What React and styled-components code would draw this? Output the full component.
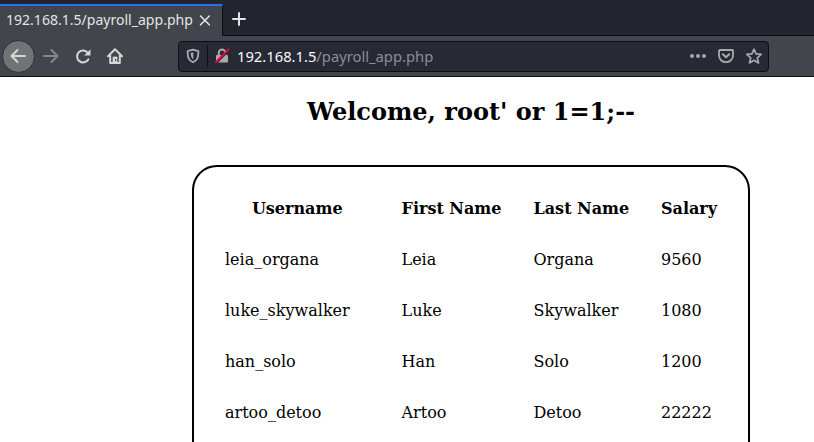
import React from "react";
import styled, { createGlobalStyle } from "styled-components";

const Global = createGlobalStyle`
  * { box-sizing: border-box; }
  html, body { margin: 0; background: #fff; overflow: hidden; }
`;

const Window = styled.div`
  width: 814px;
  height: 442px;
  overflow: hidden;
  background: #fff;
`;

const Chrome = styled.header`
  font-family: "Noto Sans", sans-serif;
  color: #e4e4e5;
`;

const TabStrip = styled.div`
  display: flex;
  height: 36px;
  padding-top: 4px;
  background: #23252e;
`;

const Tab = styled.div`
  display: flex;
  align-items: center;
  width: 223px;
  height: 32px;
  padding: 0 0 2px 6px;
  border-top: 2px solid #2374f0;
  border-right: 1px solid #0e0f14;
  background: #42454c;
  font-size: 14.05px;
  line-height: 20px;
  white-space: nowrap;
`;

const TabTitle = styled.span`
  width: 192px;
`;

const NewTab = styled.div`
  flex: 1;
  padding: 7px 0 0 8px;
  border-bottom: 1px solid #0e0f14;
`;

const Toolbar = styled.div`
  display: flex;
  align-items: center;
  height: 41px;
  padding-left: 2px;
  border-bottom: 1px solid #0c0c0d;
  background: #42454c;
`;

const NavButton = styled.div`
  display: grid;
  place-items: center;
  width: 32px;
  height: 32px;
  color: ${(p) => (p.$dim ? "#85878b" : "#d6d6d5")};
`;

const BackButton = styled(NavButton)`
  width: 33px;
  height: 33px;
  padding-right: 1px;
  border: 1px solid #2d2f35;
  border-radius: 50%;
  background: #717377;
`;

const AddressBar = styled.div`
  display: flex;
  align-items: center;
  width: 591px;
  height: 31px;
  margin-left: 47px;
  padding: 0 6px;
  border: 1px solid #0e0f14;
  border-radius: 4px;
  background: #272935;
  color: #a9a9ac;
`;

const Divider = styled.div`
  width: 1px;
  height: 22px;
  margin: 0 6px;
  background: #0e0f14;
`;

const Url = styled.div`
  flex: 1;
  margin-left: 7px;
  font-size: 14.75px;
  line-height: 20px;
  color: #8d8e93;
`;

const Host = styled.span`
  color: #fbfbfe;
`;

const Actions = styled.div`
  display: flex;
  gap: 12px;
`;

const Glyph = styled.svg`
  display: block;
  flex: none;
  width: ${(p) => p.$size || 16}px;
  height: ${(p) => p.$size || 16}px;
  fill: none;
  stroke: currentColor;
  stroke-width: ${(p) => p.$weight || 2};
  stroke-linecap: round;
  stroke-linejoin: round;
`;

const Page = styled.main`
  padding-left: 128px;
  font-family: "DejaVu Serif", serif;
  color: #000;
`;

const Heading = styled.h2`
  width: 686px;
  margin: 0;
  padding-top: 21px;
  font-size: 24px;
  line-height: 28px;
  text-align: center;
`;

const Card = styled.section`
  width: 558px;
  height: 400px;
  margin: 39px 0 0 64px;
  padding: 16px 31px;
  border: 2px solid #000;
  border-radius: 25px;
`;

const Row = styled.div`
  display: grid;
  grid-template-columns: 144.5px 100px 95.5px 56px;
  column-gap: 32px;
  height: 51px;
  align-items: center;
  font-size: 16px;
  font-weight: ${(p) => (p.$head ? 700 : 400)};
  line-height: 19px;
  white-space: nowrap;
`;

const Cell = styled.div`
  text-align: ${(p) => (p.$center ? "center" : "left")};
`;

const people = [
  ["leia_organa", "Leia", "Organa", "9560"],
  ["luke_skywalker", "Luke", "Skywalker", "1080"],
  ["han_solo", "Han", "Solo", "1200"],
  ["artoo_detoo", "Artoo", "Detoo", "22222"],
];

const Arrow = ({ flip }) => (
  <Glyph viewBox="0 0 16 16">
    <path d={flip ? "M1 8h13M8.5 2l6 6-6 6" : "M15 8H2M7.5 2l-6 6 6 6"} />
  </Glyph>
);

export default function App() {
  return (
    <Window>
      <Global />
      <Chrome>
        <TabStrip>
          <Tab>
            <TabTitle>192.168.1.5/payroll_app.php</TabTitle>
            <Glyph $size={14} $weight={1.6} viewBox="0 0 14 14">
              <path d="M2.5 3l8.8 8.8M11.3 3l-8.8 8.8" />
            </Glyph>
          </Tab>
          <NewTab>
            <Glyph viewBox="0 0 16 16">
              <path d="M8 2v12M2 8h12" />
            </Glyph>
          </NewTab>
        </TabStrip>
        <Toolbar>
          <BackButton><Arrow /></BackButton>
          <NavButton $dim><Arrow flip /></NavButton>
          <NavButton>
            <Glyph viewBox="0 0 16 16">
              <path d="M13.3 11.4A6 6 0 1 1 13 5" />
              <path d="M15.5 1.2v6.3H9.2z" fill="currentColor" stroke="none" />
            </Glyph>
          </NavButton>
          <NavButton>
            <Glyph viewBox="0 0 16 16">
              <path d="M1 8.2L8 1.2l7 7M3.2 7.5V15h9.6V7.5" />
              <path d="M6 15V9h4v6z" fill="currentColor" strokeWidth="0.8" />
              <rect x="8" y="11" width="1.2" height="2" fill="#42454c" stroke="none" />
            </Glyph>
          </NavButton>
          <AddressBar>
            <Glyph viewBox="0 0 16 16">
              <path d="M8 1.7l5.4 1.5c0 6.2-.9 9-5.4 11.1C3.5 12.200 2.6 9.4 2.6 3.200z" strokeWidth="1.8" />
              <path d="M8.300 4.300v7.200c-1.900-1.400-2.600-3.300-2.700-6.400z" fill="currentColor" stroke="none" />
            </Glyph>
            <Divider />
            <Glyph viewBox="0 0 16 16">
              <path d="M4.8 7V4.8a3.2 3.2 0 0 1 6.4 0V7" />
              <rect x="2" y="7" width="12" height="7.5" rx="1" fill="currentColor" stroke="none" />
              <path d="M2.300 15.100L14.900 2.400" stroke="#272935" strokeWidth="2" strokeLinecap="butt" />
              <path d="M1.8 14.2L14.4 1.5" stroke="#e6073c" strokeWidth="2" />
            </Glyph>
            <Url><Host>192.168.1.5</Host>/payroll_app.php</Url>
            <Actions>
              <Glyph viewBox="0 0 16 16">
                <g fill="currentColor" stroke="none">
                  <circle cx="2" cy="8" r="2" />
                  <circle cx="8" cy="8" r="2" />
                  <circle cx="14" cy="8" r="2" />
                </g>
              </Glyph>
              <Glyph viewBox="0 0 16 16">
                <path d="M1.8 2h12.4q.8 0 .8.8v4.7a7 6.7 0 0 1-14 0V2.8q0-.8.8-.8z" strokeWidth="1.8" />
                <path d="M4.8 6.2L8 9.3l3.2-3.1" />
              </Glyph>
              <Glyph viewBox="0 0 16 16">
                <path d="M8 1.200l2.100 4.700 5.100.5-3.900 3.400 1.200 5.100L8 12.300l-4.500 2.600 1.200-5.100L.8 6.400l5.100-.5z" strokeWidth="1.7" />
              </Glyph>
            </Actions>
          </AddressBar>
        </Toolbar>
      </Chrome>
      <Page>
        <Heading>Welcome, root' or 1=1;--</Heading>
        <Card>
          <Row $head>
            <Cell $center>Username</Cell>
            <Cell $center>First Name</Cell>
            <Cell $center>Last Name</Cell>
            <Cell $center>Salary</Cell>
          </Row>
          {people.map((person) => (
            <Row key={person[0]}>
              {person.map((value) => (
                <Cell key={value}>{value}</Cell>
              ))}
            </Row>
          ))}
        </Card>
      </Page>
    </Window>
  );
}
